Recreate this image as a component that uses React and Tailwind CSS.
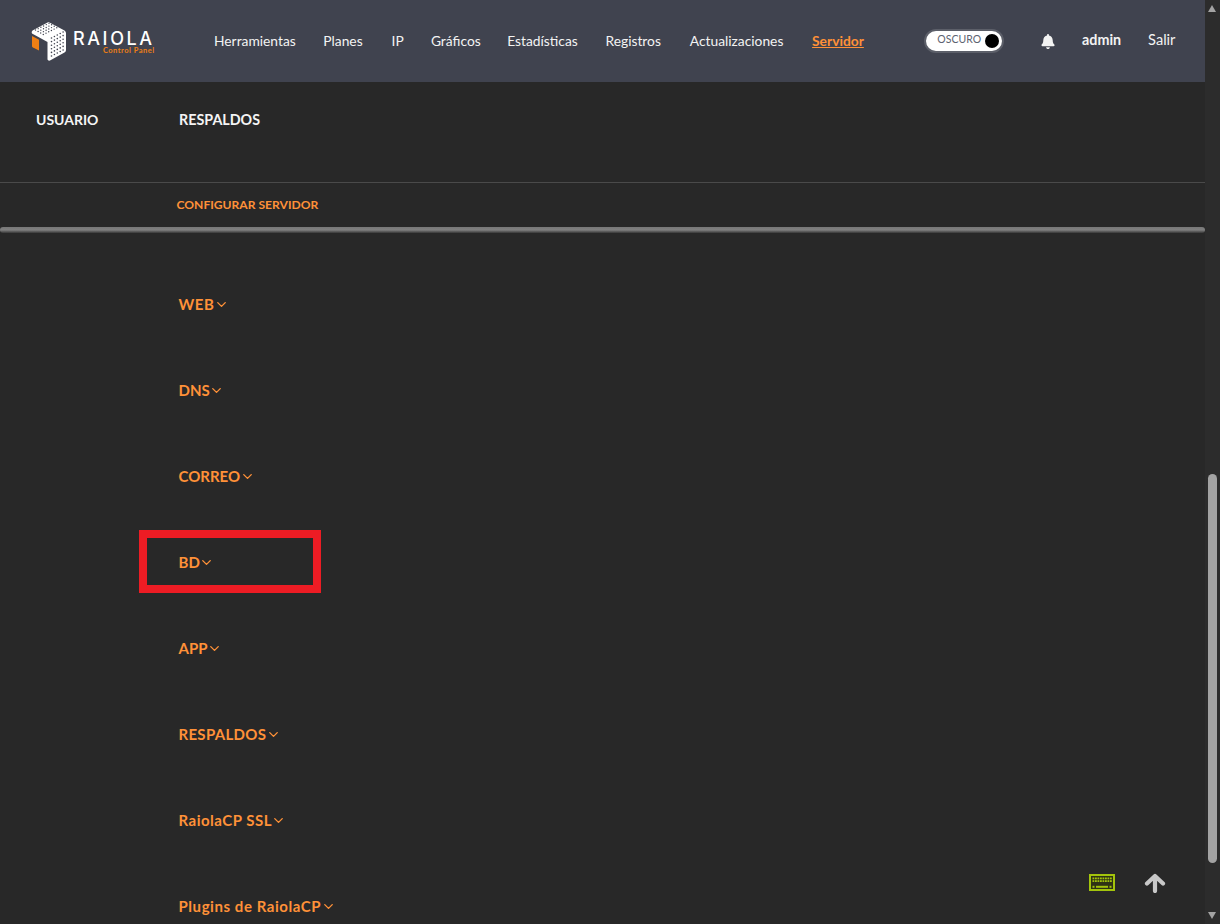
import React from "react";
import { ChevronDown } from "lucide-react";

const nav = [
  ["Herramientas", "w-[82px]"],
  ["Planes", "w-[41px]"],
  ["IP", "w-[12px]"],
  ["Gráficos", "w-[49px]"],
  ["Estadísticas", "w-[71px]"],
  ["Registros", "w-[57px]"],
  ["Actualizaciones", "w-[95px]"],
];
const rows = [
  ["WEB", "tracking-[0.6px]"],
  ["DNS", ""],
  ["CORREO", ""],
  ["BD", ""],
  ["APP", ""],
  ["RESPALDOS", "tracking-[0.3px]"],
  ["RaiolaCP SSL", "tracking-[0.5px]"],
  ["Plugins de RaiolaCP", "tracking-[0.56px]"],
];

function Logo() {
  const dots = [];
  for (let c = 0; c < 5; c++) {
    for (let r = 0; r < 6; r++) {
      dots.push(<circle key={"r" + c + r} cx={20.5 + c * 2.9} cy={17 - c * 1.5 + r * 3.6} r="0.8" fill="#40434f" />);
    }
  }
  for (let c = 0; c < 6; c++) {
    for (let r = 0; r < 4; r++) {
      dots.push(<circle key={"t" + c + r} cx={4.5 + c * 2.7 + r * 2.6} cy={9 - c * 1.35 + r * 1.5} r="0.7" fill="#40434f" />);
    }
  }
  return (
    <svg width="35" height="40" viewBox="0 0 35 40" className="shrink-0">
      <path d="M17.5 1 L33.500 9.500 Q35 10.500 35 12 V29 Q35 30.500 33.500 31.500 L19 39.500 Q17 40 16.500 38.500 V21 L1 12.500 Q0 11 1.500 9.500 Z" fill="#fff" />
      <path d="M1 15 L8 18.800 V29.500 L2 26.500 Q1 26 1 25 Z" fill="#ee7f14" />
      {dots}
    </svg>
  );
}

function Keyboard() {
  const keys = [];
  [0, 1].forEach((r) => {
    for (let i = 0; i < 8; i++) keys.push(<rect key={r + "-" + i} x={3.5 + i * 2.5} y={3.5 + r * 2.7} width="1.8" height="1.8" fill="#a3c40c" />);
  });
  return (
    <svg width="26" height="17" viewBox="0 0 26 17">
      <rect x="1" y="1" width="24" height="15" fill="#2f3315" stroke="#a3c40c" strokeWidth="2" />
      {keys}
      <rect x="3.500" y="11.800" width="2" height="2" fill="#a3c40c" />
      <rect x="7" y="11.800" width="12" height="2" fill="#a3c40c" />
      <rect x="20.500" y="11.800" width="2" height="2" fill="#a3c40c" />
    </svg>
  );
}

export default function App() {
  return (
    <div className="relative flex h-[924px] w-full overflow-hidden bg-[#282828] font-['Lato','Liberation_Sans',sans-serif]">
      <div className="relative flex h-full min-w-0 flex-1 flex-col">
        <header className="flex h-[82px] shrink-0 items-center bg-[#40434f] pl-[31px] text-[#f3f3f3]">
          <div className="flex w-[183px] shrink-0 items-center gap-[7px]">
            <Logo />
            <div className="flex flex-col pt-[3px]">
              <span className="text-[18px] leading-[16px] font-medium tracking-[2.6px] text-white font-['Inter',sans-serif]">RAIOLA</span>
              <span className="self-end text-[7.5px] leading-[8px] font-bold tracking-[0.5px] text-[#ee7f14]">Control Panel</span>
            </div>
          </div>
          <nav className="flex items-center gap-[27.3px] text-[13.8px]">
            {nav.map(([t, w]) => (
              <a key={t} className={w + " whitespace-nowrap"}>{t}</a>
            ))}
            <a className="w-[52px] font-bold whitespace-nowrap text-[#ff9138] underline">Servidor</a>
          </nav>
          <div className="ml-[60px] flex h-[24px] w-[80px] items-center justify-end gap-[4px] rounded-full border-2 border-[#5c5f69] bg-white pr-[3px]">
            <span className="mb-[2px] text-[10.5px] text-[#5b6270]">OSCURO</span>
            <span className="h-[14px] w-[14px] rounded-full bg-black" />
          </div>
          <svg className="ml-[37px]" width="14" height="15" viewBox="0 0 448 512" fill="#f3f3f3">
            <path d="M224 512c35.300 0 64-28.700 64-64H160c0 35.300 28.700 64 64 64zm215.400-149.700c-19.300-20.800-55.500-52-55.500-154.300 0-77.700-54.500-139.900-127.900-155.200V32c0-17.700-14.300-32-32-32s-32 14.300-32 32v20.800C118.600 68.100 64.100 130.300 64.100 208c0 102.300-36.200 133.500-55.500 154.300-6 6.400-8.700 14.100-8.600 21.700.1 16.400 13 32 32.100 32h383.800c19.100 0 32-15.600 32.100-32 .1-7.600-2.600-15.300-8.600-21.700z" />
          </svg>
          <span className="mb-[2px] ml-[27px] w-[39px] text-[14.3px] font-bold">admin</span>
          <span className="mb-[2px] ml-[27px] text-[14.6px]">Salir</span>
        </header>

        <div className="flex h-[101px] shrink-0 border-b border-[#4a4a4a] pt-[27px] text-[14px] font-bold text-[#f4f4f4]">
          <span className="box-content w-[143px] pl-[36px]">USUARIO</span>
          <span className="text-[14.3px]">RESPALDOS</span>
        </div>

        <div className="flex h-[44px] shrink-0 items-center pl-[176.500px] text-[12.1px] font-bold text-[#ff9138]">CONFIGURAR SERVIDOR</div>

        <div className="h-[6px] shrink-0 rounded-[3px] bg-gradient-to-b from-[#777777] via-[#808080] to-[#383838]" />

        <div className="flex flex-col pt-[28px] pl-[179px]">
          {rows.map(([r, t]) => (
            <div key={r} className={"flex h-[86px] shrink-0 items-center text-[15px] font-bold text-[#ff9138] " + t}>
              <span className="ml-[-0.5px]">{r}</span>
              <ChevronDown size={15} strokeWidth={2.2} className="ml-[-0.5px]" />
            </div>
          ))}
        </div>

        <div className="absolute top-[530px] left-[139px] h-[63px] w-[182px] border-[8px] border-[#ed1c24]" />
        <div className="absolute top-[874px] left-[1089px]"><Keyboard /></div>
        <svg className="absolute top-[873px] left-[1144px]" width="22" height="20" viewBox="0 0 22 20" fill="none" stroke="#c8c8c8" strokeWidth="4.200" strokeLinecap="round" strokeLinejoin="round">
          <path d="M3 10.500 L11 3 L19 10.500 M11 3.500 V18" />
        </svg>
      </div>

      <aside className="relative h-full w-[15px] shrink-0 bg-[#2c2c2c]">
        <div className="absolute top-[5px] left-[3px] h-0 w-0 border-x-[4.500px] border-b-[7px] border-x-transparent border-b-[#a3a3a3]" />
        <div className="absolute top-[474px] left-[3px] h-[389px] w-[9px] rounded-[5px] bg-[#a3a3a3]" />
        <div className="absolute bottom-[5px] left-[3px] h-0 w-0 border-x-[4.500px] border-t-[7px] border-x-transparent border-t-[#a3a3a3]" />
      </aside>
    </div>
  );
}
